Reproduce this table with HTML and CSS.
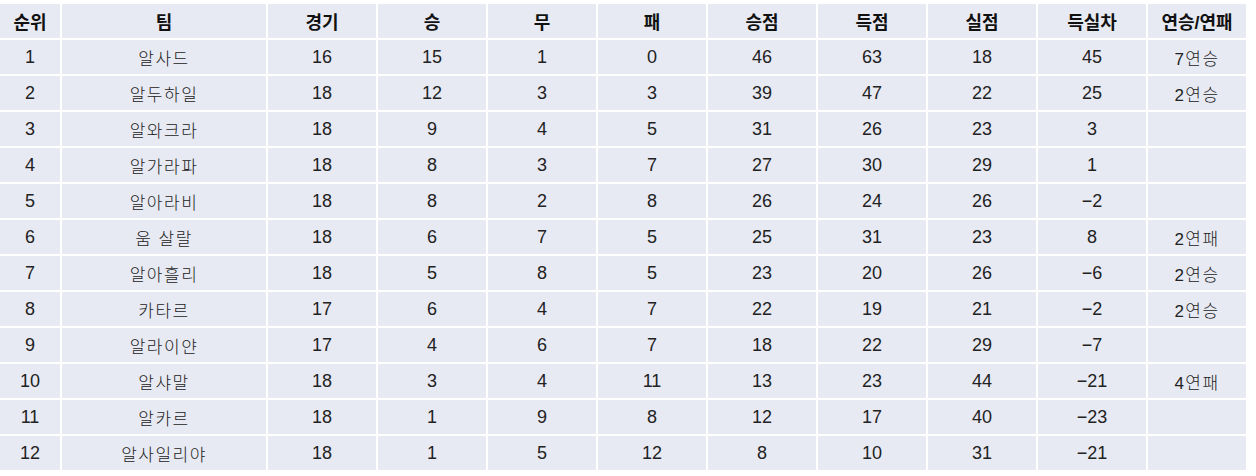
FILE: index.html
```html
<!DOCTYPE html>
<html lang="ko">
<head>
<meta charset="utf-8">
<link rel="stylesheet" href="styles.css">
</head>
<body>
<div class="standings">
  <div class="cell head">순위</div><div class="cell head">팀</div><div class="cell head">경기</div><div class="cell head">승</div><div class="cell head">무</div><div class="cell head">패</div><div class="cell head">승점</div><div class="cell head">득점</div><div class="cell head">실점</div><div class="cell head">득실차</div><div class="cell head">연승/연패</div>

  <div class="cell">1</div><div class="cell team">알사드</div><div class="cell">16</div><div class="cell">15</div><div class="cell">1</div><div class="cell">0</div><div class="cell">46</div><div class="cell">63</div><div class="cell">18</div><div class="cell">45</div><div class="cell team">7연승</div>
  <div class="cell">2</div><div class="cell team">알두하일</div><div class="cell">18</div><div class="cell">12</div><div class="cell">3</div><div class="cell">3</div><div class="cell">39</div><div class="cell">47</div><div class="cell">22</div><div class="cell">25</div><div class="cell team">2연승</div>
  <div class="cell">3</div><div class="cell team">알와크라</div><div class="cell">18</div><div class="cell">9</div><div class="cell">4</div><div class="cell">5</div><div class="cell">31</div><div class="cell">26</div><div class="cell">23</div><div class="cell">3</div><div class="cell team"></div>
  <div class="cell">4</div><div class="cell team">알가라파</div><div class="cell">18</div><div class="cell">8</div><div class="cell">3</div><div class="cell">7</div><div class="cell">27</div><div class="cell">30</div><div class="cell">29</div><div class="cell">1</div><div class="cell team"></div>
  <div class="cell">5</div><div class="cell team">알아라비</div><div class="cell">18</div><div class="cell">8</div><div class="cell">2</div><div class="cell">8</div><div class="cell">26</div><div class="cell">24</div><div class="cell">26</div><div class="cell">−2</div><div class="cell team"></div>
  <div class="cell">6</div><div class="cell team">움 살랄</div><div class="cell">18</div><div class="cell">6</div><div class="cell">7</div><div class="cell">5</div><div class="cell">25</div><div class="cell">31</div><div class="cell">23</div><div class="cell">8</div><div class="cell team">2연패</div>
  <div class="cell">7</div><div class="cell team">알아흘리</div><div class="cell">18</div><div class="cell">5</div><div class="cell">8</div><div class="cell">5</div><div class="cell">23</div><div class="cell">20</div><div class="cell">26</div><div class="cell">−6</div><div class="cell team">2연승</div>
  <div class="cell">8</div><div class="cell team">카타르</div><div class="cell">17</div><div class="cell">6</div><div class="cell">4</div><div class="cell">7</div><div class="cell">22</div><div class="cell">19</div><div class="cell">21</div><div class="cell">−2</div><div class="cell team">2연승</div>
  <div class="cell">9</div><div class="cell team">알라이얀</div><div class="cell">17</div><div class="cell">4</div><div class="cell">6</div><div class="cell">7</div><div class="cell">18</div><div class="cell">22</div><div class="cell">29</div><div class="cell">−7</div><div class="cell team"></div>
  <div class="cell">10</div><div class="cell team">알샤말</div><div class="cell">18</div><div class="cell">3</div><div class="cell">4</div><div class="cell">11</div><div class="cell">13</div><div class="cell">23</div><div class="cell">44</div><div class="cell">−21</div><div class="cell team">4연패</div>
  <div class="cell">11</div><div class="cell team">알카르</div><div class="cell">18</div><div class="cell">1</div><div class="cell">9</div><div class="cell">8</div><div class="cell">12</div><div class="cell">17</div><div class="cell">40</div><div class="cell">−23</div><div class="cell team"></div>
  <div class="cell">12</div><div class="cell team">알사일리야</div><div class="cell">18</div><div class="cell">1</div><div class="cell">5</div><div class="cell">12</div><div class="cell">8</div><div class="cell">10</div><div class="cell">31</div><div class="cell">−21</div><div class="cell team"></div>
</div>
</body>
</html>
```

FILE: styles.css
```css
html, body {
  margin: 0;
  padding: 0;
  background: #ffffff;
}

.standings {
  display: grid;
  grid-template-columns: 60px 204px repeat(8, 108px) 98px;
  grid-auto-rows: 34px;
  gap: 2px;
  padding-top: 4px;
  font-family: "Liberation Sans", "Noto Sans CJK KR", sans-serif;
  font-size: 18px;
  color: #222222;
}

.cell {
  background: #e8eaf3;
  display: flex;
  align-items: center;
  justify-content: center;
  white-space: nowrap;
}

.team {
  letter-spacing: 1.5px;
  font-size: 17px;
  font-weight: 300;
}

.head {
  font-weight: bold;
  font-size: 18px;
  color: #111111;
}
```
